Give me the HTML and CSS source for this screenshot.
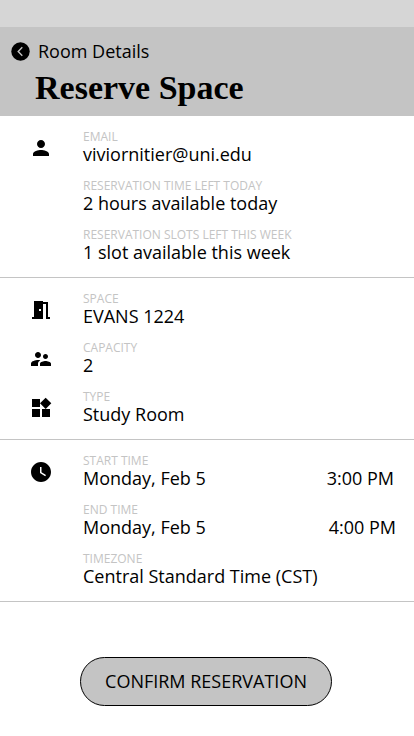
FILE: index.html
```html
<!DOCTYPE html>
<html lang="en">
<head>
<meta charset="utf-8">
<title>Reserve Space</title>
<link rel="stylesheet" href="styles.css">
</head>
<body>
<div class="status-bar"></div>
<header class="header">
  <a class="back">
    <svg class="back-icon" viewBox="0 0 19 19"><circle cx="9.500" cy="9.500" r="9.200"/><path d="M11.300 5.300 7.200 9.500l4.100 4.200" fill="none" stroke="#c4c4c4" stroke-width="1.400"/></svg>
    <span>Room Details</span>
  </a>
  <h1 class="title">Reserve Space</h1>
</header>
<main>
  <section class="section">
    <div class="row">
      <svg class="icon" viewBox="0 0 24 24"><path d="M12 12c2.21 0 4-1.79 4-4s-1.79-4-4-4-4 1.79-4 4 1.79 4 4 4zm0 2c-2.67 0-8 1.34-8 4v2h16v-2c0-2.66-5.33-4-8-4z"/></svg>
      <div class="field"><div class="label">EMAIL</div><div class="value">viviornitier@uni.edu</div></div>
    </div>
    <div class="row">
      <div class="field"><div class="label">RESERVATION TIME LEFT TODAY</div><div class="value">2 hours available today</div></div>
    </div>
    <div class="row">
      <div class="field"><div class="label">RESERVATION SLOTS LEFT THIS WEEK</div><div class="value">1 slot available this week</div></div>
    </div>
  </section>
  <section class="section">
    <div class="row">
      <svg class="icon" viewBox="0 0 24 24"><path d="M14 6v15H3v-2h2V3h9v1h5v15h2v2h-4V6h-3zm-4 5v2h2v-2h-2z"/></svg>
      <div class="field"><div class="label">SPACE</div><div class="value">EVANS 1224</div></div>
    </div>
    <div class="row">
      <svg class="icon" viewBox="0 0 24 24"><path d="M16.5 12c1.38 0 2.49-1.12 2.49-2.5S17.88 7 16.5 7C15.12 7 14 8.12 14 9.5s1.12 2.5 2.5 2.5zM9 11c1.66 0 2.99-1.34 2.99-3S10.66 5 9 5C7.34 5 6 6.34 6 8s1.34 3 3 3zm7.500 3c-1.830 0-5.500.92-5.500 2.750V19h11v-2.250c0-1.830-3.670-2.750-5.500-2.750zM9 13c-2.330 0-7 1.170-7 3.500V19h7v-2.250c0-.85.330-2.340 2.370-3.470C10.500 13.100 9.660 13 9 13z"/></svg>
      <div class="field"><div class="label">CAPACITY</div><div class="value">2</div></div>
    </div>
    <div class="row">
      <svg class="icon" viewBox="0 0 24 24"><path d="M13 13v8h8v-8h-8zM3 21h8v-8H3v8zM3 3v8h8V3H3zm13.660-1.310L11 7.340 16.660 13l5.660-5.660-5.660-5.650z"/></svg>
      <div class="field"><div class="label">TYPE</div><div class="value">Study Room</div></div>
    </div>
  </section>
  <section class="section">
    <div class="row">
      <svg class="icon" viewBox="0 0 24 24"><path d="M12 2C6.500 2 2 6.500 2 12s4.500 10 10 10 10-4.500 10-10S17.500 2 12 2zm4.200 14.200L11 13V7h1.500v5.200l4.500 2.700-.8 1.300z"/></svg>
      <div class="field"><div class="label">START TIME</div><div class="value">Monday, Feb 5</div></div>
      <div class="value time">3:00 PM</div>
    </div>
    <div class="row">
      <div class="field"><div class="label">END TIME</div><div class="value">Monday, Feb 5</div></div>
      <div class="value time time-end">4:00 PM</div>
    </div>
    <div class="row">
      <div class="field"><div class="label">TIMEZONE</div><div class="value">Central Standard Time (CST)</div></div>
    </div>
  </section>
  <button class="confirm">CONFIRM RESERVATION</button>
</main>
</body>
</html>
```
FILE: styles.css
```css
* {
  box-sizing: border-box;
}

body {
  margin: 0;
  height: 736px;
  overflow: hidden;
  background: #fff;
  color: #000;
  font: 18px/24px "Open Sans", "Noto Sans", sans-serif;
}

.status-bar {
  height: 27px;
  background: #d6d6d6;
}

.header {
  height: 89px;
  padding: 12px 0 0 11px;
  background: #c4c4c4;
}

.back {
  display: flex;
  align-items: center;
  gap: 8px;
  height: 24px;
}

.back-icon {
  width: 19px;
  height: 19px;
}

.title {
  margin: 5px 0 0 24px;
  font: bold 34px/40px "Liberation Serif", serif;
  white-space: nowrap;
}

.section {
  height: 162px;
  padding-top: 14px;
  border-bottom: 1px solid #c4c4c4;
  display: flex;
  flex-direction: column;
  gap: 15px;
}

.row {
  display: grid;
  grid-template-columns: 54px 1fr auto;
  height: 34px;
  padding: 0 20px 0 29px;
}

.icon {
  grid-column: 1;
  width: 24px;
  height: 24px;
  margin-top: 6px;
}

.field {
  grid-column: 2;
}

.label {
  font-size: 12px;
  line-height: 14px;
  color: #c4c4c4;
}

.value {
  line-height: 20px;
  white-space: nowrap;
}

.time {
  grid-column: 3;
  align-self: end;
}

.time-end {
  margin-right: -2px;
}

.confirm {
  display: block;
  width: 252px;
  height: 49px;
  margin: 55px 0 0 80px;
  padding: 0 0 2px;
  border: 1px solid #000;
  border-radius: 25px;
  background: #c4c4c4;
  color: #000;
  font: inherit;
}
```
